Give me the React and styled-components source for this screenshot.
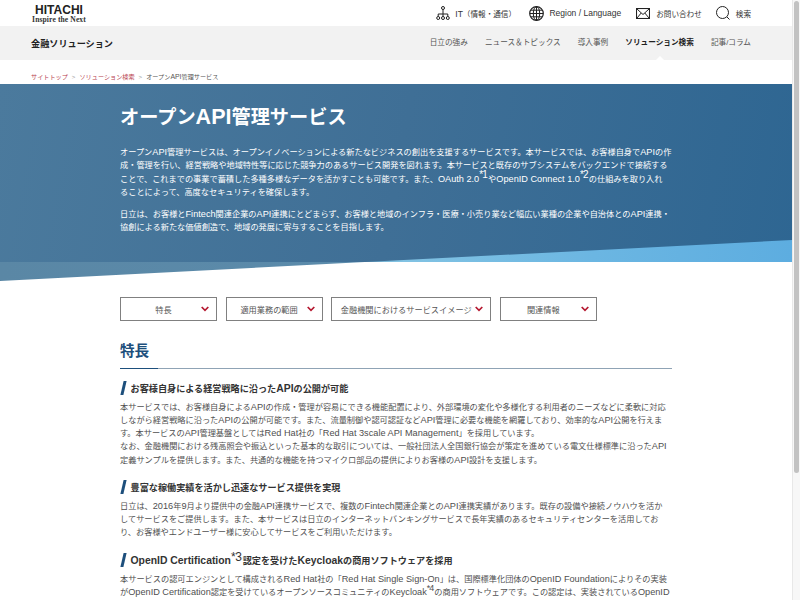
import React from "react";
import styled, { createGlobalStyle } from "styled-components";

const navy = "#1d4f7c";
const red = "#b5172f";
const jp = `"Liberation Sans", "Noto Sans CJK JP", sans-serif`;

const GlobalStyle = createGlobalStyle`
  html, body {
    margin: 0;
    padding: 0;
    height: 600px;
    overflow: hidden;
    background: #fff;
  }
  body {
    font-family: ${jp};
    color: #333;
  }
  * {
    box-sizing: border-box;
  }
`;

const Frame = styled.div`
  display: flex;
  width: 800px;
  height: 600px;
  overflow: hidden;
`;

const Page = styled.div`
  width: 792px;
  flex: none;
`;

const Scrollbar = styled.div`
  width: 8px;
  height: 600px;
  flex: none;
  background: #f7f7f7;
  border-left: 1px solid #e8e8e8;
  padding: 1px 1px 127px 1px;
`;

const ScrollThumb = styled.div`
  height: 100%;
  border-radius: 3px;
  background: #c2c2c2;
`;

/* latin runs are set a little larger than the kana/kanji around them */
const En = styled.span`
  font-size: 1.12em;
  line-height: 0;
`;

const TopBar = styled.header`
  height: 26px;
  display: flex;
  align-items: center;
  justify-content: space-between;
  padding: 0 41px 0 31px;
`;

const Logo = styled.div`
  width: 56px;
  display: flex;
  flex-direction: column;
  align-items: center;
  margin-top: 5px;
`;

const LogoMark = styled.span`
  font: 700 12px/9px "Liberation Sans", sans-serif;
  color: #222;
`;

const LogoTag = styled.span`
  font: 700 7.6px/10px "Liberation Serif", serif;
  letter-spacing: 0.1px;
  color: #333;
  white-space: nowrap;
`;

const TopLinks = styled.div`
  display: flex;
  align-items: center;
`;

const TopLink = styled.a`
  display: flex;
  align-items: center;
  gap: ${(p) => p.$gap || 5}px;
  margin-left: ${(p) => p.$left || 0}px;
  font-size: 7.6px;
  color: #333;
  white-space: nowrap;
`;

const SubNav = styled.nav`
  height: 34px;
  background: #f2f2f2;
  display: flex;
  align-items: center;
  justify-content: space-between;
  padding: 0 41px 0 31px;
`;

const SiteTitle = styled.div`
  font-size: 9.15px;
  font-weight: 700;
  color: #222;
`;

const NavItems = styled.div`
  display: flex;
  gap: 17px;
`;

const NavItem = styled.a`
  position: relative;
  font-size: 7.65px;
  line-height: 10px;
  font-weight: ${(p) => (p.$active ? 700 : 400)};
  color: ${(p) => (p.$active ? "#222" : "#555")};
  white-space: nowrap;

  ${(p) =>
    p.$active &&
    `&::after {
      content: "";
      position: absolute;
      left: 50%;
      bottom: -12px;
      margin-left: -4px;
      border: 4px solid transparent;
      border-top: 0;
      border-bottom-color: #fff;
    }`}
`;

const Crumbs = styled.div`
  height: 24px;
  display: flex;
  align-items: center;
  gap: 4px;
  padding: 8px 31px 0;
  font-size: 6.15px;
  color: #555;
`;

const CrumbLink = styled.a`
  color: #b8434f;
`;

const CrumbSep = styled.span`
  color: #999;
`;

/* the light band shows through below the slanted edge of the dark panel */
const Hero = styled.section`
  position: relative;
  height: 197px;
  padding: 22px 120px 0;
  color: #fff;
  background: linear-gradient(90deg, #5a87a5 0%, #5b8bab 44%, #82c3e3 50%, #6bb6e2 75%, #5dade0 100%);
  clip-path: polygon(0 100%, 365px 178px, 100% 178px, 100% 0, 0 0);
`;

const HeroDark = styled.div`
  position: absolute;
  inset: 0;
  background: linear-gradient(100deg, #4b7a9d 0%, #3f6f96 50%, #2e6692 100%);
  clip-path: polygon(0 0, 100% 0, 100% 156px, 365px 178px, 0 178px);
`;

const HeroTitle = styled.h1`
  position: relative;
  margin: 0 0 16px;
  font-size: 19.2px;
  line-height: 24px;
  font-weight: 700;
  color: #fff;
`;

const HeroText = styled.p`
  position: relative;
  margin: 0 0 ${(p) => p.$after || 0}px;
  width: 552px;
  font-size: 8.2px;
  line-height: 13.33px;
  color: #fff;
  white-space: nowrap;
`;

const Note = styled.sup`
  position: relative;
  top: -3.5px;
  margin-right: 1px;
  font-size: ${(p) => p.$size || 10}px;
  letter-spacing: ${(p) => p.$track ?? -0.8}px;
  line-height: 0;
  vertical-align: baseline;
  font-weight: 400;
`;

const Main = styled.main`
  padding: 16px 120px 0;
`;

const Anchors = styled.div`
  display: flex;
  gap: 8.6px;
`;

const Anchor = styled.a`
  width: ${(p) => p.$width}px;
  height: 24px;
  display: flex;
  align-items: center;
  padding: 0 7px 0 5px;
  border: 1px solid #808080;
  font-size: 8.2px;
  color: #555;
  white-space: nowrap;
`;

const AnchorLabel = styled.span`
  flex: 1;
  text-align: center;
`;

const SectionTitle = styled.h2`
  position: relative;
  margin: 18px 0 0;
  height: 29.5px;
  font-size: 14.6px;
  line-height: 24px;
  font-weight: 700;
  color: ${navy};
  border-bottom: 1px solid #8fa3b5;

  &::after {
    content: "";
    position: absolute;
    left: 0;
    bottom: -1px;
    width: 38px;
    height: 1px;
    background: ${navy};
  }
`;

const Feature = styled.h3`
  display: flex;
  align-items: center;
  gap: 6px;
  margin: ${(p) => p.$top}px 0 3px;
  height: 19px;
  font-size: 9.15px;
  font-weight: 700;
  color: #333;
  white-space: nowrap;

  ${En} {
    font-size: 10.4px;
  }
`;

const Slash = styled.span`
  width: 2.5px;
  height: 14px;
  flex: none;
  margin-left: 2px;
  background: ${navy};
  transform: skewX(-13deg);
`;

const Body = styled.p`
  margin: 0;
  width: 552px;
  font-size: 8.2px;
  line-height: 13.33px;
  color: #4f4f4f;
  white-space: nowrap;
`;

const Icon = ({ w, h, children }) => (
  <svg width={w} height={h} viewBox={`0 0 ${w} ${h}`} fill="none" stroke="#222" strokeWidth="1">
    {children}
  </svg>
);

const Chevron = () => (
  <svg width="8" height="6" viewBox="0 0 8 6" style={{ flex: "none" }}>
    <path d="M.7 1L4 4.3 7.3 1" fill="none" stroke={red} strokeWidth="1.7" />
  </svg>
);

const OrgIcon = () => (
  <Icon w={14} h={14}>
    <circle cx="7" cy="2" r="1.5" />
    <path d="M7 3.5V8M2.2 10.5V8h9.6v2.5M7 8v2.5" />
    <circle cx="2.2" cy="12" r="1.5" />
    <circle cx="7" cy="12" r="1.5" />
    <circle cx="11.8" cy="12" r="1.5" />
  </Icon>
);

const GlobeIcon = () => (
  <Icon w={15} h={15}>
    <circle cx="7.5" cy="7.5" r="6.8" strokeWidth="1.2" />
    <ellipse cx="7.5" cy="7.5" rx="3.2" ry="6.8" />
    <path d="M7.5 1v13M1 7.5h13M1.8 4.2h11.4M1.8 10.8h11.4" />
  </Icon>
);

const MailIcon = () => (
  <Icon w={14} h={11}>
    <rect x="0.5" y="0.5" width="13" height="10" strokeWidth="1.1" />
    <path d="M1 1l6 5.5L13 1M1 10l4.2-5M13 10L8.8 5" />
  </Icon>
);

const SearchIcon = () => (
  <Icon w={14} h={14}>
    <circle cx="6.5" cy="6.5" r="6" />
    <path d="M11 11l2.5 2.5" />
  </Icon>
);

export default function App() {
  return (
    <>
      <GlobalStyle />
      <Frame>
        <Page>
          <TopBar>
            <Logo>
              <LogoMark>HITACHI</LogoMark>
              <LogoTag>Inspire the Next</LogoTag>
            </Logo>
            <TopLinks>
              <TopLink>
                <OrgIcon />
                <span><En>IT</En>（情報・通信）</span>
              </TopLink>
              <TopLink $left={13.4}>
                <GlobeIcon />
                <En>Region / Language</En>
              </TopLink>
              <TopLink $left={15} $gap={6}>
                <MailIcon />
                お問い合わせ
              </TopLink>
              <TopLink $left={14} $gap={6}>
                <SearchIcon />
                検索
              </TopLink>
            </TopLinks>
          </TopBar>

          <SubNav>
            <SiteTitle>金融ソリューション</SiteTitle>
            <NavItems>
              <NavItem>日立の強み</NavItem>
              <NavItem>ニュース＆トピックス</NavItem>
              <NavItem>導入事例</NavItem>
              <NavItem $active>ソリューション検索</NavItem>
              <NavItem>記事/コラム</NavItem>
            </NavItems>
          </SubNav>

          <Crumbs>
            <CrumbLink>サイトトップ</CrumbLink>
            <CrumbSep>&gt;</CrumbSep>
            <CrumbLink>ソリューション検索</CrumbLink>
            <CrumbSep>&gt;</CrumbSep>
            <span>オープン<En>API</En>管理サービス</span>
          </Crumbs>

          <Hero>
            <HeroDark />
            <HeroTitle>オープン<En>API</En>管理サービス</HeroTitle>
            <HeroText $after={8.7}>
              オープン<En>API</En>管理サービスは、オープンイノベーションによる新たなビジネスの創出を支援するサービスです。本サービスでは、お客様自身で<En>API</En>の作
              <br />
              成・管理を行い、経営戦略や地域特性等に応じた競争力のあるサービス開発を図れます。本サービスと既存のサブシステムをバックエンドで接続する
              <br />
              ことで、これまでの事業で蓄積した多種多様なデータを活かすことも可能です。また、<En>OAuth 2.0</En><Note>*1</Note>や<En>OpenID Connect 1.0</En><Note>*2</Note>の仕組みを取り入れ
              <br />
              ることによって、高度なセキュリティを確保します。
            </HeroText>
            <HeroText>
              日立は、お客様と<En>Fintech</En>関連企業の<En>API</En>連携にとどまらず、お客様と地域のインフラ・医療・小売り業など幅広い業種の企業や自治体との<En>API</En>連携・
              <br />
              協創による新たな価値創造で、地域の発展に寄与することを目指します。
            </HeroText>
          </Hero>

          <Main>
            <Anchors>
              <Anchor $width={97}>
                <AnchorLabel>特長</AnchorLabel>
                <Chevron />
              </Anchor>
              <Anchor $width={97}>
                <AnchorLabel>適用業務の範囲</AnchorLabel>
                <Chevron />
              </Anchor>
              <Anchor $width={160}>
                <AnchorLabel>金融機関におけるサービスイメージ</AnchorLabel>
                <Chevron />
              </Anchor>
              <Anchor $width={97}>
                <AnchorLabel>関連情報</AnchorLabel>
                <Chevron />
              </Anchor>
            </Anchors>

            <SectionTitle>特長</SectionTitle>

            <Feature $top={10}>
              <Slash />
              <span>お客様自身による経営戦略に沿った<En>API</En>の公開が可能</span>
            </Feature>
            <Body>
              本サービスでは、お客様自身による<En>API</En>の作成・管理が容易にできる機能配置により、外部環境の変化や多様化する利用者のニーズなどに柔軟に対応
              <br />
              しながら経営戦略に沿った<En>API</En>の公開が可能です。また、流量制御や認可認証など<En>API</En>管理に必要な機能を網羅しており、効率的な<En>API</En>公開を行えま
              <br />
              す。本サービスの<En>API</En>管理基盤としては<En>Red Hat</En>社の「<En>Red Hat 3scale API Management</En>」を採用しています。
              <br />
              なお、金融機関における残高照会や振込といった基本的な取引については、一般社団法人全国銀行協会が策定を進めている電文仕様標準に沿った<En>API</En>
              <br />
              定義サンプルを提供します。また、共通的な機能を持つマイクロ部品の提供によりお客様の<En>API</En>設計を支援します。
            </Body>

            <Feature $top={10.5}>
              <Slash />
              <span>豊富な稼働実績を活かし迅速なサービス提供を実現</span>
            </Feature>
            <Body>
              日立は、<En>2016</En>年<En>9</En>月より提供中の金融<En>API</En>連携サービスで、複数の<En>Fintech</En>関連企業との<En>API</En>連携実績があります。既存の設備や接続ノウハウを活か
              <br />
              してサービスをご提供します。また、本サービスは日立のインターネットバンキングサービスで長年実績のあるセキュリティセンターを活用してお
              <br />
              り、お客様やエンドユーザー様に安心してサービスをご利用いただけます。
            </Body>

            <Feature $top={11}>
              <Slash />
              <span>
                <En>OpenID Certification</En><Note $size={12} $track={-0.3}>*3</Note>認定を受けた<En>Keycloak</En>の商用ソフトウェアを採用
              </span>
            </Feature>
            <Body>
              本サービスの認可エンジンとして構成される<En>Red Hat</En>社の「<En>Red Hat Single Sign-On</En>」は、国際標準化団体の<En>OpenID Foundation</En>によりその実装
              <br />
              が<En>OpenID Certification</En>認定を受けているオープンソースコミュニティの<En>Keycloak</En><Note $size={9} $track={-1}>*4</Note>の商用ソフトウェアです。この認定は、実装されている<En>OpenID</En>
            </Body>
          </Main>
        </Page>
        <Scrollbar>
          <ScrollThumb />
        </Scrollbar>
      </Frame>
    </>
  );
}
